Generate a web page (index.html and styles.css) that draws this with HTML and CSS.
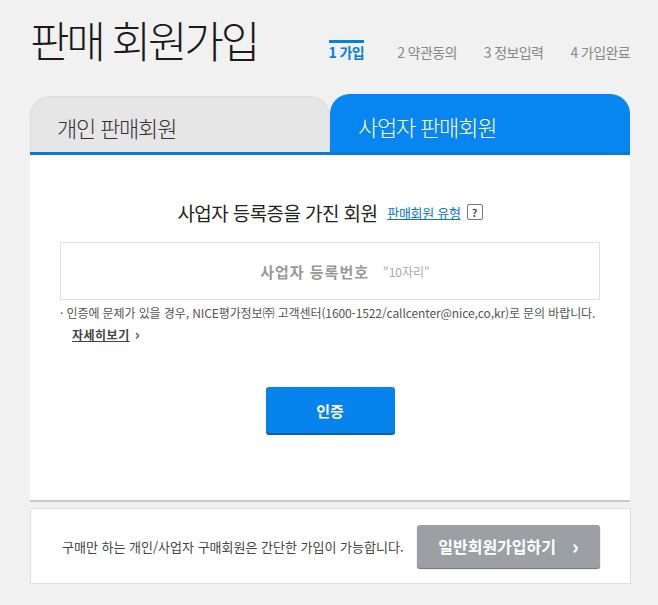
FILE: index.html
```html
<!DOCTYPE html>
<html lang="ko">
<head>
    <meta charset="utf-8">
    <title>판매 회원가입</title>
    <link rel="stylesheet" href="styles.css">
</head>
<body>
    <div class="join">
        <div class="j_head">
            <h1>판매 회원가입</h1>
            <ol class="j_steps">
                <li class="on">1 가입</li>
                <li>2 약관동의</li>
                <li>3 정보입력</li>
                <li>4 가입완료</li>
            </ol>
        </div>
        <div class="j_tabs">
            <a href="#none" class="j_tab">개인 판매회원</a>
            <a href="#none" class="j_tab on">사업자 판매회원</a>
        </div>
        <div class="j_body">
            <div class="jb_title">
                <h2>사업자 등록증을 가진 회원</h2>
                <a href="#none" class="jb_type">판매회원 유형</a>
                <span class="jb_help">?</span>
            </div>
            <div class="jb_input">
                <strong>사업자 등록번호</strong>
                <span>"10자리"</span>
            </div>
            <p class="jb_note">· 인증에 문제가 있을 경우, NICE평가정보㈜ 고객센터(1600-1522/callcenter@nice,co,kr)로 문의 바랍니다.</p>
            <a href="#none" class="jb_more">자세히보기</a><span class="jb_arrow">›</span>
            <div class="jb_btn">
                <a href="#none">인증</a>
            </div>
        </div>
        <div class="j_foot">
            <span>구매만 하는 개인/사업자 구매회원은 간단한 가입이 가능합니다.</span>
            <a href="#none" class="jf_btn">일반회원가입하기 <b>›</b></a>
        </div>
    </div>
</body>
</html>
```
FILE: styles.css
```css
body {padding: 0px; margin: 0px; background-color: #f1f1f1; font-family: "Noto Sans CJK KR", "Noto Sans", sans-serif; color: #222;}
a {text-decoration: none; color: inherit;}
h1, h2, ol, p {margin: 0; padding: 0;}
/* =============================================================== */
.join {
    width: 601px;
    margin-left: 30px;
}
.j_head {
    display: flex;
    align-items: flex-start;
    height: 95px;
    width: 600px;
}
.j_head h1 {
    font-size: 43px;
    font-weight: 300;
    letter-spacing: -3.2px;
    line-height: 44px;
    margin-top: 17px;
    color: #1a1a1a;
}
.j_steps {
    display: flex;
    list-style: none;
    margin: 40px 0px 0px auto;
}
.j_steps li {
    font-size: 14px;
    color: #888;
    letter-spacing: -0.6px;
    border-top: 3px solid transparent;
    padding-top: 1px;
    line-height: 17px;
    margin-right: 27px;
}
.j_steps li:first-child {
    margin-right: 33px;
}
.j_steps li:last-child {
    margin-right: 0px;
}
.j_steps li.on {
    color: #0a7fdb;
    font-weight: 700;
    border-top-color: #0a7fdb;
}
/* =============================================================== */
.j_tabs {
    display: flex;
    align-items: flex-end;
    height: 57px;
    border-bottom: 3px solid #0a7ad8;
    width: 600px;
}
.j_tab {
    width: 300px;
    box-sizing: border-box;
    height: 56px;
    padding: 14px 0px 0px 26px;
    font-size: 22px;
    font-weight: 300;
    letter-spacing: -1.2px;
    color: #333;
    background-color: #e6e6e6;
    border: 1px solid #dcdcdc;
    border-bottom: none;
    border-radius: 20px 20px 0px 0px;
}
.j_tab.on {
    height: 58px;
    padding: 15px 0px 0px 27px;
    background-color: #0785f0;
    border-color: #0785f0;
    color: #fff;
}
/* =============================================================== */
.j_body {
    width: 600px;
    height: 347px;
    background-color: #fff;
    border-bottom: 2px solid #c9c9c9;
    padding: 0px 30px;
    box-sizing: border-box;
}
.jb_title {
    display: flex;
    align-items: center;
    justify-content: center;
    padding: 44px 0px 0px 0px;
    height: 26px;
}
.jb_title h2 {
    font-size: 19px;
    font-weight: 400;
    letter-spacing: -0.6px;
    color: #222;
}
.jb_type {
    margin-left: 10px;
    font-size: 13px;
    letter-spacing: -0.3px;
    color: #0a74d0;
    text-decoration: underline;
}
.jb_help {
    display: flex;
    align-items: center;
    justify-content: center;
    width: 14px;
    height: 14px;
    margin-left: 6px;
    border: 1px solid #777;
    border-radius: 2px;
    font-size: 11px;
    font-weight: 700;
    color: #555;
}
.jb_input {
    display: flex;
    align-items: center;
    justify-content: center;
    gap: 14px;
    margin-top: 17px;
    height: 58px;
    border: 1px solid #e2e2e2;
    box-sizing: border-box;
    padding-left: 30px;
}
.jb_input strong {
    font-size: 15px;
    color: #999;
    letter-spacing: 1px;
}
.jb_input span {
    font-size: 12px;
    color: #aaa;
}
.jb_note {
    margin: 5px 0px 0px 0px;
    font-size: 12px;
    letter-spacing: -0.1px;
    color: #555;
    white-space: nowrap;
    line-height: 16px;
}
.jb_more {
    display: inline-block;
    margin-left: 12px;
    font-size: 12px;
    font-weight: 700;
    letter-spacing: 0.5px;
    color: #444;
    text-decoration: underline;
    line-height: 16px;
}
.jb_arrow {
    margin-left: 5px;
    font-size: 15px;
    font-weight: 700;
    color: #555;
}
.jb_btn {
    display: flex;
    justify-content: center;
    margin-top: 42px;
}
.jb_btn a {
    display: flex;
    align-items: center;
    justify-content: center;
    width: 129px;
    height: 46px;
    box-sizing: border-box;
    background-color: #0783ee;
    border-radius: 3px;
    box-shadow: 0px 2px 0px #0a5fae;
    color: #fff;
    font-size: 15px;
    font-weight: 700;
}
/* =============================================================== */
.j_foot {
    display: flex;
    align-items: center;
    margin-top: 6px;
    height: 76px;
    width: 601px;
    box-sizing: border-box;
    background-color: #fff;
    border: 1px solid #dedede;
    padding: 0px 30px 0px 31px;
}
.j_foot span {
    flex: 1;
    font-size: 13px;
    letter-spacing: 0px;
    color: #444;
}
.jf_btn {
    display: flex;
    align-items: center;
    justify-content: center;
    gap: 16px;
    width: 183px;
    height: 43px;
    box-sizing: border-box;
    background-color: #9ca0a4;
    border-radius: 3px;
    box-shadow: 0px 1px 1px #6c7074;
    color: #fff;
    font-size: 16px;
    font-weight: 700;
}
.jf_btn b {
    font-size: 20px;
    line-height: 20px;
}
```
